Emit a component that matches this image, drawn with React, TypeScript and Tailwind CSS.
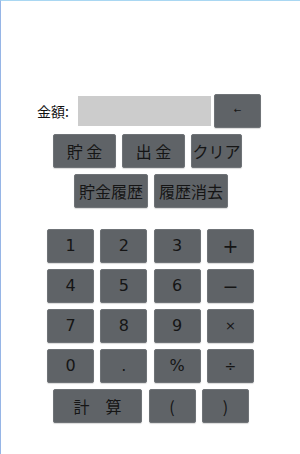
import React from "react";

const btn =
  "flex items-center justify-center bg-[#5f6367] border border-[#6f7377] rounded-[2px] text-[#151515] shadow-[0_1px_1px_rgba(0,0,0,0.15)] h-[34px]";

const jp = "font-['Noto_Sans_CJK_JP','Noto_Sans',sans-serif]";
const dv = "font-['DejaVu_Sans','Noto_Sans_CJK_JP',sans-serif]";

type Key = { label: string; cls: string };

const keys: Key[] = [
  { label: "1", cls: "text-[16px]" },
  { label: "2", cls: "text-[16px]" },
  { label: "3", cls: "text-[16px]" },
  { label: "+", cls: "text-[19px]" },
  { label: "4", cls: "text-[16px]" },
  { label: "5", cls: "text-[16px]" },
  { label: "6", cls: "text-[16px]" },
  { label: "−", cls: "text-[19px]" },
  { label: "7", cls: "text-[16px]" },
  { label: "8", cls: "text-[16px]" },
  { label: "9", cls: "text-[16px]" },
  { label: "×", cls: "text-[13px]" },
  { label: "0", cls: "text-[16px]" },
  { label: ".", cls: "text-[16px]" },
  { label: "%", cls: "text-[16px]" },
  { label: "÷", cls: "text-[14px]" },
];

export default function App() {
  return (
    <div className="w-[300px] h-[454px] bg-white border-t border-l border-t-[#a9d7f2] border-l-[#96b5e6] overflow-hidden">
      <div className="flex flex-col pt-[93px]">
        <div className="flex items-center pl-[36px] h-[34px]">
          <span className={`${jp} text-[14px] text-[#111] w-[33px] leading-none`}>金額:</span>
          <div className="ml-[8px] w-[133px] h-[30px] bg-[#cccccc]" />
          <button className={`${btn} ${dv} ml-[3px] w-[47px] text-[9px]`}>←</button>
        </div>
        <div className="flex pl-[52px] gap-[6px] mt-[6px]">
          <button className={`${btn} ${jp} w-[63px] text-[16px]`}>貯 金</button>
          <button className={`${btn} ${jp} w-[63px] text-[16px]`}>出 金</button>
          <button className={`${btn} ${jp} w-[51px] text-[16px]`}>クリア</button>
        </div>
        <div className="flex pl-[73px] gap-[6px] mt-[6px]">
          <button className={`${btn} ${jp} w-[74px] text-[16px]`}>貯金履歴</button>
          <button className={`${btn} ${jp} w-[74px] text-[16px]`}>履歴消去</button>
        </div>
        <div className="grid grid-cols-[47px_47px_47px_47px] gap-x-[6.33px] gap-y-[6px] pl-[46px] mt-[21px]">
          {keys.map((k) => (
            <button key={k.label} className={`${btn} ${dv} ${k.cls}`}>
              {k.label}
            </button>
          ))}
        </div>
        <div className="flex pl-[52px] gap-[6.5px] mt-[6px]">
          <button className={`${btn} ${jp} w-[89px] text-[16px]`}>計　算</button>
          <button className={`${btn} ${jp} w-[47px] text-[16px]`}>(</button>
          <button className={`${btn} ${jp} w-[47px] text-[16px]`}>)</button>
        </div>
      </div>
    </div>
  );
}
